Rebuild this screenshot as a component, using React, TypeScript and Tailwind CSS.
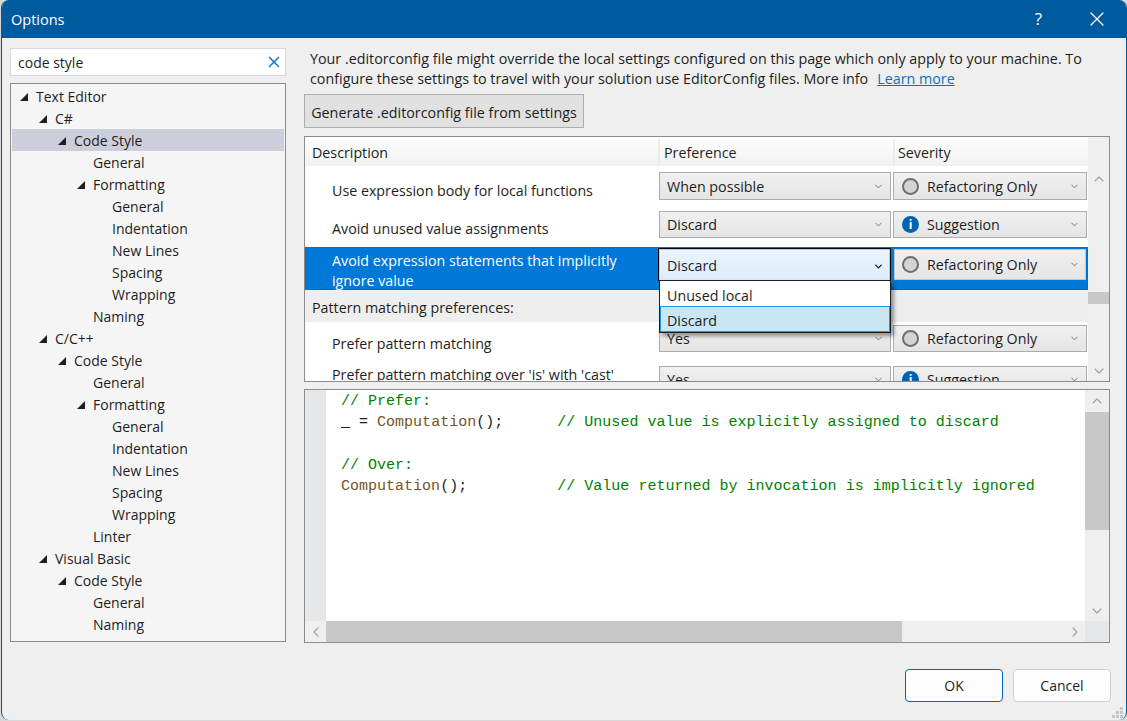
import { ChevronDown, ChevronLeft, ChevronRight, ChevronUp, X } from "lucide-react";

const tree: [number, string, boolean?, boolean?][] = [
  [0, "Text Editor", true],
  [1, "C#", true],
  [2, "Code Style", true, true],
  [3, "General"],
  [3, "Formatting", true],
  [4, "General"],
  [4, "Indentation"],
  [4, "New Lines"],
  [4, "Spacing"],
  [4, "Wrapping"],
  [3, "Naming"],
  [1, "C/C++", true],
  [2, "Code Style", true],
  [3, "General"],
  [3, "Formatting", true],
  [4, "General"],
  [4, "Indentation"],
  [4, "New Lines"],
  [4, "Spacing"],
  [4, "Wrapping"],
  [3, "Linter"],
  [1, "Visual Basic", true],
  [2, "Code Style", true],
  [3, "General"],
  [3, "Naming"],
];

const indents = ["pl-[8px]", "pl-[27px]", "pl-[46px]", "pl-[65px]", "pl-[84px]"];

const Arrow = () => (
  <svg width="8" height="8" viewBox="0 0 8 8" className="mr-[8px] shrink-0 mt-[1px]">
    <polygon points="8,0 8,8 0,8" fill="#1e1e1e" />
  </svg>
);

const TreeRow = ({ level, label, open, selected }: { level: number; label: string; open?: boolean; selected?: boolean }) => (
  <div className={`h-[22px] flex items-center ${indents[level]} ${selected ? "bg-[#cccedb]" : ""}`}>
    {open ? <Arrow /> : <span className="w-[16px] shrink-0" />}
    <span>{label}</span>
  </div>
);

const Radio = () => (
  <span className="w-[17px] h-[17px] rounded-full border-2 border-[#6f6f6f] bg-[#d4d4d4] shrink-0" />
);

const Info = () => (
  <span className="w-[17px] h-[17px] rounded-full bg-[#0063b1] shrink-0 flex items-center justify-center text-white text-[12px] font-bold leading-none">
    i
  </span>
);

const Combo = ({
  label,
  icon,
  focus,
  className = "",
}: {
  label: string;
  icon?: "radio" | "info";
  focus?: boolean;
  className?: string;
}) => (
  <div
    className={`flex items-center pr-[6px] ${icon ? "pl-[8px]" : "pl-[7px]"} border ${
      focus
        ? "border-[#0078d7] bg-gradient-to-b from-[#f0f0f0] to-[#e5e5e5] shadow-[inset_0_0_0_1px_#c4c4c4]"
        : "border-[#acacac] bg-gradient-to-b from-[#f0f0f0] to-[#e5e5e5]"
    } ${className}`}
  >
    {icon === "radio" && <Radio />}
    {icon === "info" && <Info />}
    <span className={`flex-1 truncate pt-[1px] ${icon ? "ml-[8px]" : ""}`}>{label}</span>
    <ChevronDown size={11} strokeWidth={2} className="text-[#6d6d6d]" />
  </div>
);

const ScrollBtn = ({ children, className = "" }: { children: React.ReactNode; className?: string }) => (
  <div className={`flex items-center justify-center text-[#a0a0a0] ${className}`}>{children}</div>
);

const Row = ({
  label,
  pref,
  sev,
  icon,
  height,
  pad,
  comboH,
  labelPos,
}: {
  label: string;
  pref: string;
  sev: string;
  icon: "radio" | "info";
  height: string;
  pad: string;
  comboH: string;
  labelPos: string;
}) => (
  <div className={`flex ${height} ${pad}`}>
    <div className={`w-[354px] pl-[27px] whitespace-nowrap ${labelPos}`}>{label}</div>
    <Combo label={pref} className={`w-[232px] ${comboH}`} />
    <Combo label={sev} icon={icon} className={`w-[194px] ml-[2px] ${comboH}`} />
  </div>
);

export default function App() {
  return (
    <div className="w-[1127px] h-[721px] bg-[#d8d8d8] pl-[1px]">
      <div
        className="w-[1126px] h-[720px] bg-[#efefef] border-x border-[#005a9e] rounded-[8px] overflow-hidden flex flex-col text-[14px] text-[#1e1e1e] relative"
        style={{ fontFamily: '"Open Sans", "Noto Sans", sans-serif' }}
      >
        <div className="h-[38px] bg-[#005a9e] text-white flex items-center pl-[9px] shrink-0">
          <span className="text-[14.5px] flex-1 pt-[2px]">Options</span>
          <span className="text-[17px] mr-[43px]">?</span>
          <X size={24} strokeWidth={1.2} className="mr-[17px]" />
        </div>

        <div className="flex-1 flex pl-[8px] pt-[10px]">
          <div className="w-[276px] flex flex-col shrink-0">
            <div className="h-[28px] border border-[#d6d6e6] bg-white flex items-center pl-[7px] pr-[2px]">
              <span className="flex-1">code style</span>
              <X size={18} strokeWidth={2.2} className="text-[#1a7cc8]" />
            </div>
            <div className="mt-[7px] h-[559px] border border-[#8c8c8c] bg-[#f5f5f5] pt-[1px] px-[1px] overflow-hidden">
              {tree.map(([level, label, open, selected], i) => (
                <TreeRow key={i} level={level} label={label} open={open} selected={selected} />
              ))}
            </div>
          </div>

          <div className="ml-[18px] w-[806px] flex flex-col text-[14.25px]">
            <p className="leading-[20px] h-[46px] pl-[6px] pt-[1px] whitespace-nowrap text-[14.3px]">
              Your .editorconfig file might override the local settings configured on this page which only apply to your machine. To
              <br />
              configure these settings to travel with your solution use EditorConfig files. More info
              <span className="ml-[9px] text-[#0e70c0] underline">Learn more</span>
            </p>
            <div className="h-[34px] w-[280px] border border-[#adadad] bg-[#e1e1e1] flex items-center justify-center whitespace-nowrap pt-[3px] text-[14.3px]">
              Generate .editorconfig file from settings
            </div>

            {/* options grid */}
            <div className="mt-[8px] h-[246px] border border-[#8c8c8c] bg-white flex relative">
              <div className="w-[783px] overflow-hidden">
                <div className="flex h-[29px] bg-gradient-to-b from-white to-[#f1f1f1] pt-[2px]">
                  <div className="w-[353px] pl-[7px] flex items-center">Description</div>
                  <div className="w-[2px] bg-[#ececec]" />
                  <div className="w-[233px] pl-[4px] flex items-center">Preference</div>
                  <div className="w-[2px] bg-[#ececec]" />
                  <div className="flex-1 pl-[3px] flex items-center">Severity</div>
                </div>
                <Row label="Use expression body for local functions" pref="When possible" sev="Refactoring Only" icon="radio" height="h-[40px]" pad="pt-[6px]" comboH="h-[28px]" labelPos="pt-[8px]" />
                <Row label="Avoid unused value assignments" pref="Discard" sev="Suggestion" icon="info" height="h-[41px]" pad="pt-[5px]" comboH="h-[27px]" labelPos="pt-[7px]" />
                <div className="flex h-[43px] bg-[#0078d7] text-white border border-[#0a6cbc]">
                  <div className="w-[352px] pl-[26px] leading-[20px] pt-[3px]">
                    Avoid expression statements that implicitly
                    <br />
                    ignore value
                  </div>
                  <div className="w-[232px] h-[32px] border-t border-black" />
                  <Combo label="Refactoring Only" icon="radio" focus className="w-[194px] h-[33px] ml-[3px] text-[#1e1e1e]" />
                </div>
                <div className="h-[32px] bg-[#eeeeee] pl-[7px] pt-[4px] flex items-center">Pattern matching preferences:</div>
                <Row label="Prefer pattern matching" pref="Yes" sev="Refactoring Only" icon="radio" height="h-[41px]" pad="pt-[3px]" comboH="h-[27px]" labelPos="pt-[8px]" />
                <Row label="Prefer pattern matching over 'is' with 'cast'" pref="Yes" sev="Suggestion" icon="info" height="h-[28px]" pad="pt-[3px]" comboH="h-[27px]" labelPos="-mt-[2px]" />
              </div>
              <div className="flex-1 bg-[#efefef] relative flex flex-col justify-between py-[34px] pb-[2px]">
                <ScrollBtn className="h-[16px]"><ChevronUp size={16} strokeWidth={1.6} /></ScrollBtn>
                <ScrollBtn className="h-[16px]"><ChevronDown size={16} strokeWidth={1.6} /></ScrollBtn>
                <div className="absolute top-[155px] left-0 right-0 h-[12px] bg-[#c8c8c8]" />
              </div>

              {/* open dropdown */}
              <div className="absolute left-[353px] top-[111px] w-[233px]">
                <div className="h-[33px] border border-black border-b-0 bg-gradient-to-b from-[#ebf4fd] to-[#dcecfc] shadow-[inset_0_0_0_1px_#a9d2f5] flex items-center pl-[8px] pr-[6px] pt-[2px]">
                  <span className="flex-1">Discard</span>
                  <ChevronDown size={11} strokeWidth={3} />
                </div>
                <div className="ml-[1px] border border-[#1e1e1e] bg-white shadow-[3px_3px_4px_rgba(0,0,0,0.4)] mt-[-1px] h-[53px]">
                  <div className="h-[25px] flex items-center pl-[7px] pt-[4px]">Unused local</div>
                  <div className="h-[26px] flex items-center pl-[6px] pt-[3px] bg-[#c9e6f4] border border-[#1c97ea]">Discard</div>
                </div>
              </div>
            </div>

            {/* preview */}
            <div className="mt-[7px] h-[254px] border border-[#8c8c8c] bg-white flex flex-col">
              <div className="flex-1 flex min-h-0">
                <div className="w-[21px] bg-[#e6e7e8] shrink-0" />
                <pre
                  className="flex-1 pl-[15px] pt-[1px] text-[15.03px] leading-[21.3px] text-[#008000]"
                  style={{ fontFamily: '"Liberation Mono", monospace' }}
                >
                  {"// Prefer:\n"}
                  <span className="text-[#0000ff] underline decoration-[#0000ff] [text-decoration-skip-ink:none]">_</span>
                  <span className="text-[#1e1e1e]"> = </span>
                  <span className="text-[#74531f]">Computation</span>
                  <span className="text-[#1e1e1e]">();</span>
                  {"      // Unused value is explicitly assigned to discard\n\n// Over:\n"}
                  <span className="text-[#74531f]">Computation</span>
                  <span className="text-[#1e1e1e]">();</span>
                  {"          // Value returned by invocation is implicitly ignored"}
                </pre>
                <div className="w-[24px] bg-[#efefef] flex flex-col shrink-0">
                  <ScrollBtn className="h-[22px]"><ChevronUp size={16} strokeWidth={1.6} /></ScrollBtn>
                  <div className="h-[118px] bg-[#c8c8c8]" />
                  <div className="flex-1" />
                  <ScrollBtn className="h-[20px]"><ChevronDown size={16} strokeWidth={1.6} /></ScrollBtn>
                </div>
              </div>
              <div className="h-[21px] flex shrink-0 bg-[#efefef]">
                <ScrollBtn className="w-[21px]"><ChevronLeft size={16} strokeWidth={1.6} /></ScrollBtn>
                <div className="w-[576px] bg-[#c8c8c8]" />
                <div className="flex-1" />
                <ScrollBtn className="w-[20px]"><ChevronRight size={16} strokeWidth={1.6} /></ScrollBtn>
                <div className="w-[24px] bg-[#e6e7e8]" />
              </div>
            </div>

            <div className="mt-[26px] flex justify-end gap-[10px] -mr-[1px]">
              <div className="w-[98px] h-[33px] rounded-[4px] border border-[#0067c0] bg-[#fdfdfd] flex items-center justify-center text-[14px]">OK</div>
              <div className="w-[98px] h-[33px] rounded-[4px] border border-[#d0d0d0] bg-[#fdfdfd] flex items-center justify-center text-[14px]">Cancel</div>
            </div>
          </div>
        </div>

        {/* resize grip */}
        <svg width="12" height="12" viewBox="0 0 12 12" className="absolute right-[2px] bottom-[1px]" fill="#c6c6c6">
          <rect x="8" y="0" width="3" height="3" />
          <rect x="4" y="4" width="3" height="3" />
          <rect x="8" y="4" width="3" height="3" />
          <rect x="0" y="8" width="3" height="3" />
          <rect x="4" y="8" width="3" height="3" />
          <rect x="8" y="8" width="3" height="3" />
        </svg>
      </div>
    </div>
  );
}
